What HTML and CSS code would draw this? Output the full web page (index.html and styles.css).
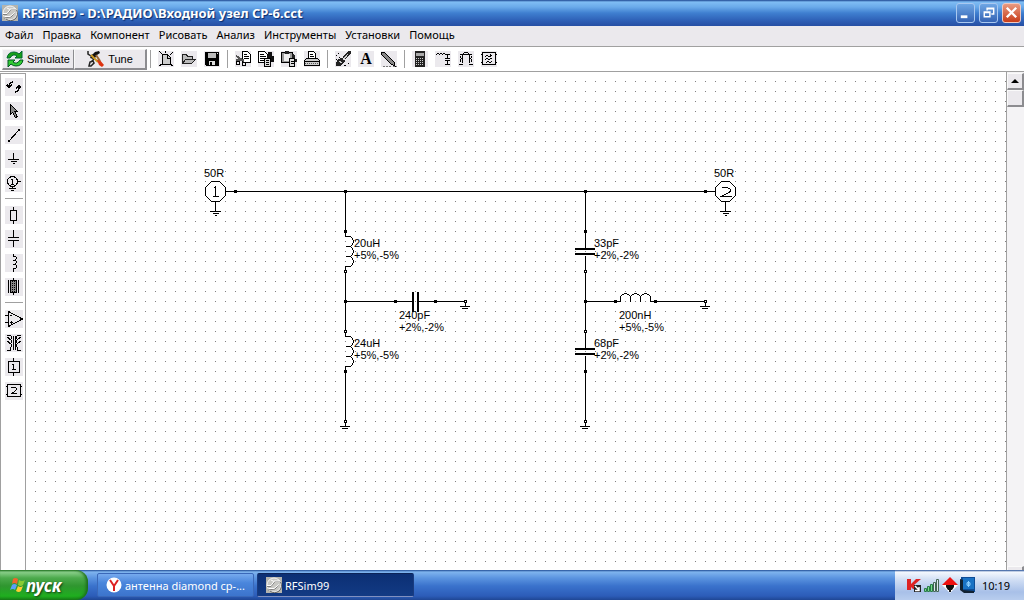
FILE: index.html
```html
<!DOCTYPE html>
<html lang="ru">
<head>
    <meta charset="UTF-8">
    <meta name="viewport" content="width=device-width, initial-scale=1.0">
    <title>RFSim99</title>
    <link rel="stylesheet" href="styles.css">
</head>
<body>

<!-- Shared shapes -->
<svg class="defs" aria-hidden="true">
    <symbol id="app-logo" viewBox="0 0 16 16">
        <rect width="16" height="16" fill="#b4b4ae"/>
        <circle cx="8" cy="8" r="7" fill="#c8c8c4" stroke="#f4f4f4"/>
        <path d="M14.500 5A7 7 0 0 1 4 14" fill="none" stroke="#666"/>
        <path d="M1 9.500h4l4-5h5M2 13l7-1 4-4" fill="none" stroke="#808080"/>
        <path d="M1 8.500h4l3-4L5 3M8 4h6M3 11.500h5l5-4" fill="none" stroke="#fff"/>
    </symbol>
    <g id="node"><rect x="-1.500" y="-1.500" width="3" height="3" fill="#000" stroke="none"/></g>
    <g id="pin"><rect x="-1" y="-1" width="2" height="2" fill="#fff"/></g>
    <g id="ground"><path d="M0 0v5M-5.500 5H4.500M-3.500 7H2.500"/></g>
    <g id="port-body">
        <path d="M-4-10H4L10-4V4L4 10H-4L-10 4V-4Z" fill="#fff"/>
        <path d="M0 10V20M-5.500 20H5.500M-3 22H3.500M-1 24H1.500"/>
    </g>
    <g id="coil"><path d="M0 0V5H5L7 7L8 10L7 13L5 15M0 15H5L7 17L8 20L7 23L5 25M0 25H5L7 27L8 30L7 33L5 35H0V40"/></g>
    <g id="cap">
        <path d="M0 0V17M0 24V40"/>
        <path d="M-10.500 17.500H9.500M-10.500 22.500H9.500" stroke-width="2"/>
    </g>
</svg>

<header class="titlebar">
    <svg class="logo" aria-hidden="true"><use href="#app-logo"/></svg>
    <h1>RFSim99 - D:\РАДИО\Входной узел CP-6.cct</h1>
    <div class="window-buttons">
        <button aria-label="Свернуть"><svg viewBox="0 0 18 18"><path d="M4 12h7v3H4z" fill="#fff"/></svg></button>
        <button aria-label="Восстановить"><svg viewBox="0 0 18 18" fill="none" stroke="#fff" stroke-width="1.500"><path d="M7.500 7V4.500h7v6H12M7 5h8"/><path d="M4.500 8.500h6v5h-6zM4 9h7"/></svg></button>
        <button class="close" aria-label="Закрыть"><svg viewBox="0 0 18 18"><path d="M4 4l10 10M14 4L4 14" stroke="#fff" stroke-width="2.500"/></svg></button>
    </div>
</header>

<nav class="menubar">
    <button>Файл</button>
    <button>Правка</button>
    <button>Компонент</button>
    <button>Рисовать</button>
    <button>Анализ</button>
    <button>Инструменты</button>
    <button>Установки</button>
    <button>Помощь</button>
</nav>

<div class="toolbar">
    <button class="action">
        <svg viewBox="0 0 18 16"><path d="M1 7Q2 1 8 1Q11 1 13 3L16 0V7H9L11 5Q7 2 4 7Z" fill="#18a018" stroke="#063"/><path d="M17 9Q16 15 10 15Q7 15 5 13L2 16V9H9L7 11Q11 14 14 9Z" fill="#3c3" stroke="#052"/></svg>
        Simulate
    </button>
    <button class="action">
        <svg viewBox="0 0 18 16"><path d="M4 5L8 1L12 0L13 2L10 4L8 7L6 8L3 7Z" fill="#111"/><path d="M1 0v3l3 2 2-1M2 15l1-4 3-1 1 2-3 3zM7 8L4 11" fill="none" stroke="#222" stroke-width="1.500"/><path d="M4 4L11 11" stroke="#c92" stroke-width="2"/><path d="M10 9L12 8L17 14L15 16L12 14Z" fill="#d31"/><path d="M9 4L13 10" stroke="#963" stroke-width="2"/></svg>
        Tune
    </button>
    <hr>
    <button aria-label="Новый"><svg viewBox="0 0 16 16"><path d="M4.500 3.500h5l3 3v7h-8z" fill="#ccc" stroke="#000"/><path d="M9.500 3v4H13M1 0l3 3M15 1l-3 3M1 15l3-2M15 15l-3-2M7.500 0v2" fill="none" stroke="#000"/></svg></button>
    <button aria-label="Открыть"><svg viewBox="0 0 16 16"><path d="M1.500 12.500v-9h4l1 2h5v3M1.500 12.500l3-4h10l-4 4z" fill="#bbb" stroke="#222"/></svg></button>
    <button aria-label="Сохранить"><svg viewBox="0 0 16 16"><path d="M1 1h14v14H2l-1-1z" fill="#000"/><path d="M4 2h8v5H4z" fill="#bbb"/><path d="M5 10h6v4H5zM13 2h1v1h-1z" fill="#ddd"/><path d="M6 11h2v3H6z"/></svg></button>
    <hr>
    <button aria-label="Вырезать"><svg viewBox="0 0 16 16"><path d="M7.500.5h5l3 3v8h-8z" fill="#fff" stroke="#000"/><path d="M9 3.500h3M9 5.500h5M9 7.500h5" stroke="#000"/><path d="M1 5l8 5M1 9h8" stroke="#555" stroke-width="2"/><circle cx="3" cy="12" r="2" fill="none" stroke="#000"/><circle cx="9" cy="13" r="2" fill="none" stroke="#000"/></svg></button>
    <button aria-label="Копировать"><svg viewBox="0 0 16 16"><path d="M.5.500h6l3 3v8h-9z" fill="#fff" stroke="#000"/><path d="M2 3.500h4M2 5.500h6M2 7.500h6M2 9.500h6" stroke="#000"/><path d="M10 1h4v4h2v6h-5l-2-3z" fill="#111"/><path d="M6.500 7.500h6v8h-6z" fill="#ddd" stroke="#000"/><path d="M8 9.500h3M8 11.500h3M8 13.500h3" stroke="#000"/></svg></button>
    <button aria-label="Вставить"><svg viewBox="0 0 16 16"><path d="M.5 1.500h11v10H.5z" fill="#999" stroke="#000"/><path d="M3 3h6v7H3z" fill="#eee"/><path d="M4 0h4v3H4zM11 3l3 1v4h2v3h-4z" fill="#222"/><path d="M8.500 7.500h5v8h-5z" fill="#ddd" stroke="#000"/><path d="M10 10.500h3M10 12.500h3" stroke="#000"/></svg></button>
    <button aria-label="Печать"><svg viewBox="0 0 16 16"><path d="M4.500 7.500v-7h5l2 2v5" fill="#fff" stroke="#000"/><path d="M6 3.500h3M6 5.500h4" stroke="#000"/><path d="M.5 9.500l2-2h11l2 2v5H.5z" fill="#ccc" stroke="#000"/><path d="M1 12.500h14" stroke="#555" stroke-dasharray="1 1"/><path d="M1 10.500h14" stroke="#000"/></svg></button>
    <hr>
    <button aria-label="Стереть"><svg viewBox="0 0 16 16"><path d="M7 6l6-6h3v2l-6 7z" fill="#222"/><path d="M3 8l4-1 3 3-4 5H1v-3z" fill="#222"/><path d="M4 10l3 2M8 9l5-6" stroke="#ccc"/><path d="M1 4.500h1M3 2.500h1M1 8.500h1M9 14.500h2M13 12.500h1M4 6.500h1" stroke="#000"/></svg></button>
    <button class="letter" aria-label="Текст">A</button>
    <button aria-label="Линия"><svg viewBox="0 0 16 16"><path d="M1 1l2 0 10 10 1 4-4-2L0 3z" fill="#888" stroke="#000"/><path d="M2 15.500h8M12 15.500h4" stroke="#777" stroke-dasharray="2 1"/></svg></button>
    <hr>
    <button aria-label="Калькулятор"><svg viewBox="0 0 16 16"><path d="M3 0h10v16H3z" fill="#222"/><path d="M4 2h8v3H4z" fill="#aaa"/><path d="M4 7.500h8M4 9.500h8M4 11.500h8M4 13.500h8" stroke="#ccc" stroke-dasharray="1 1"/></svg></button>
    <button aria-label="Согласование"><svg viewBox="0 0 16 16" fill="none" stroke="#000"><path d="M1 3.500h1M2 2.500h2M4 3.500h1M5 2.500h2M7 3.500h1M8 2.500h2M10 3.500h5M12.500 4v4M10 7.500h5M10 9.500h5M12.500 10v4M10 13.500h5"/></svg></button>
    <button aria-label="Фильтр"><svg viewBox="0 0 16 16" fill="none" stroke="#000"><path d="M2 3.500h12M5.500 2v1M10.500 2v1M6 1.500h4M4.500 4v8M11.500 4v8M2.500 5v2M3.500 7v1M2.500 8v3M13.500 5v2M12.500 7v1M13.500 8v3M1 13.500h4M11 13.500h4"/></svg></button>
    <button aria-label="Аттенюатор"><svg viewBox="0 0 16 16" fill="none" stroke="#000"><path d="M1.500 1.500h13v12h-13zM0 3.500h2M0 11.500h2M14 3.500h2M14 11.500h2M4 5.500h1M5 4.500h2M7 5.500h2M9 4.500h2M4 8.500h1M5 7.500h2M7 8.500h2M9 7.500h2M5 11.500h1M6 10.500h2M8 11.500h2M10 10.500h1M9 3v3"/></svg></button>
</div>

<main class="workspace">
    <div class="palette">
        <button aria-label="Повернуть"><svg viewBox="0 0 18 18" fill="none" stroke="#000" stroke-width="1.500"><path d="M8 4Q4 4 4 9M2 7l2 2 3-2M10 14Q14 14 14 9M11 10l3-2 2 2"/></svg></button>
        <button aria-label="Выбрать"><svg viewBox="0 0 18 18"><path d="M5.500 2.500v10l2-2 3 5 2-1-3-5h3z" fill="#888" stroke="#000"/></svg></button>
        <button aria-label="Проводник"><svg viewBox="0 0 18 18"><path d="M4 15L14 4" stroke="#000"/><path d="M3 14h2v2H3zM13 3h2v2h-2z"/></svg></button>
        <button aria-label="Земля"><svg viewBox="0 0 18 18" fill="none" stroke="#000"><path d="M8.500 3v6M3 9.500h11M6 11.500h6M8 13.500h2"/></svg></button>
        <button aria-label="Порт"><svg viewBox="0 0 18 18" fill="none" stroke="#000"><circle cx="7.500" cy="7.500" r="5"/><path d="M6 5.500h1M7.500 5v5M6 10.500h3M13 7.500h3M7.500 13v1M4 14.500h7M6 16.500h3"/></svg></button>
        <hr>
        <button aria-label="Резистор"><svg viewBox="0 0 18 18" fill="none" stroke="#000"><path d="M8.500 1v3M5.500 4.500h6v10h-6zM8.500 14v4"/></svg></button>
        <button aria-label="Конденсатор"><svg viewBox="0 0 18 18" fill="none" stroke="#000"><path d="M8.500 0v7M3 7.500h11M3 10.500h11M8.500 11v6"/></svg></button>
        <button aria-label="Катушка"><svg viewBox="0 0 18 18" fill="none" stroke="#000"><path d="M8.500 0v2M8 2.500h3M11.500 3v2M8 6.500h3M11.500 7v2M8 10.500h3M11.500 11v3M8 14.500h3M8.500 15v3M10.500 5v1M10.500 9v1"/></svg></button>
        <button aria-label="Линия передачи"><svg viewBox="0 0 18 18" fill="none" stroke="#000"><path d="M3.500 2v13M13.500 2v13M8.500 0v17"/><path d="M5.500 2.500h6v12h-6z" fill="#888"/><path d="M7.500 3v12M9.500 3v12" stroke-dasharray="1 1"/></svg></button>
        <hr>
        <button aria-label="Усилитель"><svg viewBox="0 0 18 18" fill="none" stroke="#000"><path d="M3.500 1.500v15l14-7.500zM0 5.500h3M0 12.500h3M5 5.500h2M5 12.500h3M6.500 11v3"/></svg></button>
        <button aria-label="Трансформатор"><svg viewBox="0 0 18 18" fill="none" stroke="#000"><path d="M2 1.500h3.500q3 2 0 4q3 2 0 4q3 2 0 4v3H2M16 1.500h-3.500q-3 2 0 4q-3 2 0 4q-3 2 0 4v3H16M8.500 2v14M10.500 2v14M2 3l4 3M2 7l4 3M16 3l-4 3M16 7l-4 3"/></svg></button>
        <button aria-label="Однополюсник"><svg viewBox="0 0 18 18" fill="none" stroke="#000"><path d="M3.500 3.500h11v11h-11zM8.500 0v3M8.500 15v3M7 6.500h1M8.500 6v6M7 11.500h4"/></svg></button>
        <button aria-label="Двухполюсник"><svg viewBox="0 0 18 18" fill="none" stroke="#000"><path d="M2.500 2.500h13v12h-13zM1 4.500h1M1 12.500h1M16 4.500h1M16 12.500h1M6 5.500h5M11.500 6v2M10 8.500h1M9 9.500h1M7 10.500h2M6 11.500h6"/></svg></button>
    </div>

    <div class="canvas">
        <!-- One unit is one pixel, grid pitch is 10 -->
        <svg class="schematic" width="760" height="380">
            <g class="lines" transform="translate(-.5 -.5)">
                <!-- Ports and through line -->
                <use href="#port-body" x="190" y="120"/>
                <use href="#port-body" x="700" y="120"/>
                <path d="M200 120H690"/>
                <path d="M188 117l2-2v10M187 125h6"/>
                <path d="M696 116h6l3 2v2l-9 5h10"/>
                <use href="#node" x="210" y="120"/>
                <use href="#node" x="320" y="120"/>
                <use href="#node" x="560" y="120"/>
                <use href="#node" x="680" y="120"/>

                <!-- Left branch -->
                <path d="M320 120V160M320 200V260M320 300V350M320 230H387M393 230H440"/>
                <use href="#coil" x="320" y="160"/>
                <use href="#coil" x="320" y="260"/>
                <path class="plates" d="M387.500 220.500V240.500M392.500 220.500V240.500"/>
                <use href="#node" x="320" y="160"/>
                <use href="#node" x="320" y="230"/>
                <use href="#node" x="370" y="230"/>
                <use href="#node" x="410" y="230"/>
                <use href="#node" x="320" y="300"/>
                <use href="#ground" x="320" y="350"/>
                <use href="#ground" x="440" y="230"/>
                <use href="#pin" x="320" y="200"/>
                <use href="#pin" x="320" y="260"/>
                <use href="#pin" x="320" y="350"/>
                <use href="#pin" x="440" y="230"/>

                <!-- Right branch -->
                <path d="M560 120V160M560 200V260M560 300V350M560 230H590M630 230H680"/>
                <use href="#cap" x="560" y="160"/>
                <use href="#cap" x="560" y="260"/>
                <use href="#coil" transform="translate(590 230) rotate(-90)"/>
                <use href="#node" x="560" y="160"/>
                <use href="#node" x="560" y="230"/>
                <use href="#node" x="590" y="230"/>
                <use href="#node" x="630" y="230"/>
                <use href="#node" x="560" y="300"/>
                <use href="#ground" x="560" y="350"/>
                <use href="#ground" x="680" y="230"/>
                <use href="#pin" x="560" y="200"/>
                <use href="#pin" x="560" y="260"/>
                <use href="#pin" x="560" y="350"/>
                <use href="#pin" x="680" y="230"/>
            </g>
            <g class="labels">
                <text x="178" y="105">50R</text>
                <text x="688" y="105">50R</text>
                <text x="328" y="175">20uH</text>
                <text x="328" y="187">+5%,-5%</text>
                <text x="328" y="275">24uH</text>
                <text x="328" y="287">+5%,-5%</text>
                <text x="373" y="247">240pF</text>
                <text x="373" y="259">+2%,-2%</text>
                <text x="568" y="175">33pF</text>
                <text x="568" y="187">+2%,-2%</text>
                <text x="568" y="275">68pF</text>
                <text x="568" y="287">+2%,-2%</text>
                <text x="593" y="247">200nH</text>
                <text x="593" y="259">+5%,-5%</text>
            </g>
        </svg>
    </div>

    <div class="scrollbar">
        <button aria-label="Вверх"><svg viewBox="0 0 8 4"><path d="M0 4L4 0L8 4z"/></svg></button>
        <div class="thumb"></div>
        <button class="down" aria-label="Вниз"></button>
    </div>
</main>

<footer class="taskbar">
    <button class="start">
        <svg viewBox="0 0 16 16"><path d="M3 2q2-2 5 0L7 7Q4 5 2 7z" fill="#f0642c"/><path d="M9 3q3 2 6 0l-2 5q-2 2-5 0z" fill="#8c3"/><path d="M2 8q2-2 5 0l-2 5q-2-2-5 0z" fill="#5aa0f8"/><path d="M8 9q2 2 5 0l-2 5q-2 2-5 0z" fill="#fc3"/></svg>
        пуск
    </button>
    <button class="task">
        <svg viewBox="0 0 16 16"><circle cx="8" cy="8" r="7.500" fill="#fff"/><path d="M4 3l4 6 4-6M8 8v6" fill="none" stroke="#d22" stroke-width="2"/></svg>
        антенна diamond cp-...
    </button>
    <button class="task active">
        <svg aria-hidden="true"><use href="#app-logo"/></svg>
        RFSim99
    </button>
    <div class="tray">
        <svg viewBox="0 0 16 16"><path d="M1 2h4v5l5-5h5L8 8l3 4H7L5 10v3H1z" fill="#d22"/><path d="M8 8h7v7H8z" fill="#222"/><path d="M9 9l4 4M13 10v3.500h-4" fill="none" stroke="#fff" stroke-width="1.500"/></svg>
        <svg viewBox="0 0 16 16" fill="#7d8" stroke="#2a7a4a"><path d="M.5 11.500h2v3h-2zM3.500 9.500h2v5h-2zM6.500 7.500h2v7h-2z"/><path d="M9.500 5.500h2v9h-2zM12.500 2.500h2v12h-2z" fill="#dfe8ee" stroke="#465"/></svg>
        <svg viewBox="0 0 16 16"><path d="M8 0l8 8H0z" fill="#e11"/><path d="M0 8h16l-8 8z" fill="#fff"/><path d="M4 8h8v2l-2 3H9v2H7v-2H6l-2-3z" fill="#111"/></svg>
        <svg viewBox="0 0 16 16"><path d="M1 0h14v15H5l-4-4z" fill="#0d4c96"/><path d="M3 1h11v11H3z" fill="#1972c4"/><path d="M0 2l3 1v10l11 1v2H4l-4-3z" fill="#123"/><path d="M6 7h5M8.500 4v6M7 5l3 4M10 5L7 9" stroke="#8cf"/></svg>
        <time>10:19</time>
    </div>
</footer>

</body>
</html>
```
FILE: styles.css
```css
* {
    box-sizing: border-box;
}
body {
    margin: 0;
    font-family: "Noto Sans", "Open Sans", sans-serif;
    font-size: 11px;
    color: black;
    background-color: white;
    display: flex;
    flex-direction: column;
    height: 100vh;
    overflow: hidden;
}
button {
    font: inherit;
    color: inherit;
    background: none;
    border: none;
    padding: 0;
    margin: 0;
}
hr {
    border: none;
    margin: 0;
    background-color: #a0a0a0;
}
svg {
    display: block;
    flex: none;
}
.defs {
    position: absolute;
    width: 0;
    height: 0;
}

/* Title bar */
.titlebar {
    display: flex;
    align-items: center;
    gap: 4px;
    height: 26px;
    padding: 0 3px 0 2px;
    background: linear-gradient(#1c4590 0, #7fbdf4 2px, #6aaaea 7px, #3f7fd0 13px, #2f62b8 20px, #264fa4 100%);
    color: white;
}
.logo {
    width: 16px;
    height: 16px;
}
.titlebar h1 {
    margin: 0;
    font-size: 13px;
    font-weight: bold;
    text-shadow: 1px 1px 1px #0a2a6a;
    white-space: nowrap;
}
.window-buttons {
    display: flex;
    gap: 4px;
    margin-left: auto;
    padding-bottom: 1px;
}
.window-buttons button {
    width: 19px;
    height: 20px;
    border: 1px solid #a9c8f0;
    border-radius: 3px;
    background: linear-gradient(#6ea6e4, #3463b4);
}
.window-buttons .close {
    background: linear-gradient(#e89a80, #c83c18);
    border-color: #f0c8c0;
}

/* Menu */
.menubar {
    display: flex;
    align-items: flex-start;
    gap: 9px;
    height: 20px;
    padding: 0 5px;
    line-height: 17px;
    background-color: #ebe9ed;
}

/* Top toolbar */
.toolbar {
    display: flex;
    align-items: center;
    gap: 7px;
    height: 26px;
    padding-left: 2px;
    border-top: 1px solid #a0a0a0;
    border-bottom: 1px solid #a0a0a0;
}
.toolbar hr {
    width: 1px;
    height: 18px;
}
.toolbar button {
    width: 16px;
    height: 16px;
    background-color: #ebe9ed;
    shape-rendering: crispEdges;
}
.toolbar .action {
    display: flex;
    align-items: center;
    justify-content: center;
    gap: 3px;
    width: 73px;
    height: 21px;
    font-family: "Liberation Sans", sans-serif;
    border: 1px solid #f8f8f8;
    border-right: 2px solid #8c8c90;
    border-bottom: 2px solid #8c8c90;
    shape-rendering: auto;
}
.action + .action {
    margin-left: -8px;
}
.action + hr {
    margin-left: -4px;
}
.action svg {
    width: 18px;
    height: 16px;
}
.toolbar .letter {
    font-family: "Liberation Serif", serif;
    font-size: 16px;
    font-weight: bold;
    line-height: 16px;
}

/* Work area */
.workspace {
    display: flex;
    flex: 1;
    min-height: 0;
}
.palette {
    display: flex;
    flex-direction: column;
    align-items: center;
    gap: 6px;
    width: 26px;
    margin-top: 1px;
    padding: 4px 0 0 2px;
    border: 1px solid #a0a0a0;
    border-bottom: none;
}
.palette button {
    width: 18px;
    height: 18px;
    background-color: #ebe9ed;
    shape-rendering: crispEdges;
}
.palette hr {
    width: 18px;
    height: 2px;
    flex: none;
    background-color: white;
    border-top: 1px solid #a0a0a0;
}
.canvas {
    flex: 1;
    min-width: 0;
    overflow: hidden;
    background-image: conic-gradient(at 1px 1px, transparent 75%, #808080 0);
    background-size: 10px 10px;
    background-position: 9px 9px;
}
.lines {
    fill: none;
    stroke: black;
    stroke-width: 1px;
    shape-rendering: crispEdges;
}
.plates {
    stroke-width: 2px;
}
.labels {
    font-family: "Liberation Sans", sans-serif;
    font-size: 11px;
}
.scrollbar {
    display: flex;
    flex-direction: column;
    width: 18px;
    padding-top: 1px;
    border-left: 1px solid #a0a0a0;
    background-color: #f4f3f5;
    overflow: hidden;
}
.scrollbar button,
.thumb {
    display: flex;
    align-items: center;
    justify-content: center;
    flex: none;
    height: 17px;
    background-color: #ebe9ed;
    border: 1px solid #fafafa;
    border-right: 2px solid #8c8c90;
    border-bottom: 2px solid #8c8c90;
}
.scrollbar svg {
    width: 8px;
    height: 4px;
}
.scrollbar .down {
    margin-top: auto;
    margin-bottom: -13px;
}

/* Taskbar */
.taskbar {
    display: flex;
    align-items: center;
    gap: 3px;
    height: 30px;
    color: white;
    background: linear-gradient(#1f4b94 0, #7fb4ee 2px, #5b94e0 8px, #3a72cc 16px, #2c5cb8 26px, #1f4694 100%);
}
.start {
    display: flex;
    align-items: center;
    width: 88px;
    height: 30px;
    margin-right: 6px;
    padding-left: 10px;
    font-size: 17px;
    font-weight: bold;
    font-style: italic;
    text-shadow: 1px 1px 2px #143c14;
    border-radius: 0 12px 12px 0;
    background: linear-gradient(#2c7c2c 0, #8cd08c 2px, #4caa4c 8px, #2f962f 16px, #1fae1f 26px, #168016 100%);
    box-shadow: inset -2px 0 3px #1c6c1c;
}
.start svg,
.task svg,
.tray svg {
    width: 16px;
    height: 16px;
}
.task {
    display: flex;
    align-items: center;
    gap: 3px;
    width: 157px;
    height: 24px;
    padding-left: 8px;
    white-space: nowrap;
    border: 1px solid #3a68b8;
    border-radius: 2px;
    background: linear-gradient(#76aaee, #4a86dc 40%, #3c74cc);
}
.task.active {
    border-color: #0c2458 #1a3c80 #8090c0;
    background: linear-gradient(#0c2f74, #123a84);
}
.tray {
    display: flex;
    align-items: center;
    gap: 2px;
    width: 129px;
    height: 30px;
    margin-left: auto;
    padding-left: 11px;
    color: black;
    background: linear-gradient(#1f4b94 0, #f4f8fe 2px, #d0def4 10px, #a8c0e8 22px, #b8cdee 100%);
}
.tray time {
    margin-left: 4px;
}
```
